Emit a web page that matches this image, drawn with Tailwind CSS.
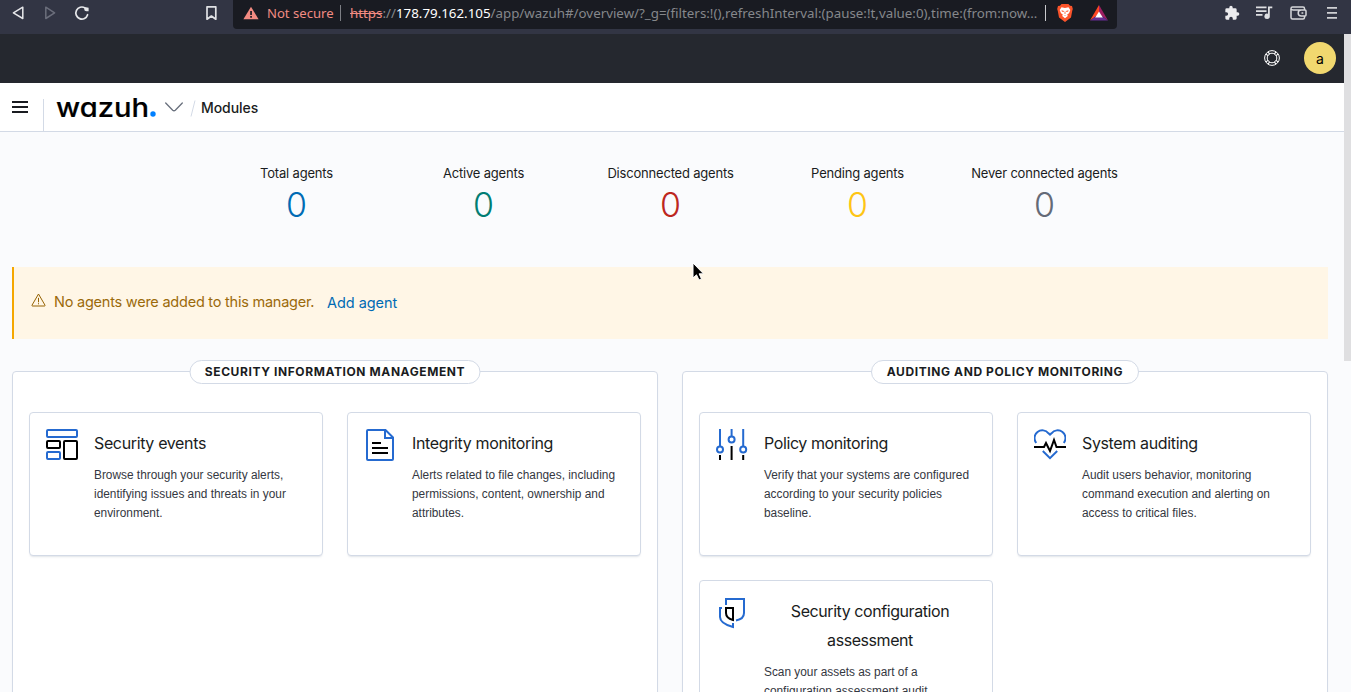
<!DOCTYPE html>
<html lang="en">
<head>
<meta charset="utf-8">
<title>Wazuh</title>
<script src="https://cdn.jsdelivr.net/npm/@tailwindcss/browser@4"></script>
</head>
<body class="w-[1351px] h-[692px] overflow-hidden relative bg-[#fafbfd] font-['Inter',sans-serif] text-[#1a1c21] flex flex-col">

<!-- Browser toolbar -->
<div class="h-[34px] shrink-0 bg-[#323544] flex items-start">
  <div class="w-[233px] h-[26px] flex items-center shrink-0">
    <svg class="ml-[12px]" width="13" height="16" viewBox="0 0 13 16" fill="none" stroke="#e6e7ea" stroke-width="1.5" stroke-linejoin="round"><path d="M10.800 2.200V13.500L1.400 7.900Z"/></svg>
    <svg class="ml-[19px]" width="13" height="16" viewBox="0 0 13 16" fill="none" stroke="#6b6e7b" stroke-width="1.500" stroke-linejoin="round"><path d="M1.800 2.200V13.500L10.600 7.900Z"/></svg>
    <svg class="ml-[17px]" width="16" height="16" viewBox="0 0 16 16" fill="none" stroke="#e6e7ea" stroke-width="1.700" stroke-linecap="round"><path d="M13.600 9.700A6 6 0 1 1 11 2.900"/><path d="M10.200 3.200Q10.600 2 12 2.200L14.600 2.800V6.200H12.400Q10.200 6.200 10.200 3.900Z" fill="#e6e7ea" stroke="none"/></svg>
    <svg class="ml-[115.500px]" width="11" height="16" viewBox="0 0 11 16" fill="none" stroke="#e0e1e4" stroke-width="1.700" stroke-linejoin="round"><path d="M1 1.800H9.800V14.200L5.400 11L1 14.200Z"/></svg>
  </div>
  <div class="w-[884px] h-[29px] bg-[#191b22] rounded-b-[4px] flex items-center pb-[3px] shrink-0 font-['Noto_Sans',sans-serif] text-[13.330px] whitespace-nowrap">
    <svg class="ml-[10px] shrink-0" width="16" height="14" viewBox="0 0 16 14"><path d="M8 .8L15.600 13.200H.4Z" fill="#f28b82"/><path d="M7.200 5h1.700v4H7.200zM7.200 10h1.700v1.700H7.200z" fill="#191b22"/></svg>
    <span class="ml-[8px] mt-[2px] w-[67px] text-[13.100px] text-[#f28b82]">Not secure</span>
    <span class="ml-[6px] w-px h-4 bg-[#7c7e84]"></span>
    <span class="ml-[9px] mt-[2px] w-[689px] text-[#85878b]"><span class="text-[#f28b82] line-through">https</span>://<span class="text-white">178.79.162.105</span>/app/wazuh#/overview/?_g=(filters:!(),refreshInterval:(pause:!t,value:0),time:(from:now…</span>
    <span class="ml-[6px] w-px h-4 bg-[#c9cacd]"></span>
    <svg class="ml-[11px] shrink-0" width="16" height="18" viewBox="0 0 16 18"><path d="M4.500 0H11.500L13 1.700L15 2L15.800 5L15.200 7L14 13.500L8 18L2 13.500L.8 7L.2 5L1 2L3 1.700Z" fill="#fb542b"/><path d="M4.500 3.300L8 4L11.500 3.300L13.300 6L12 9.300L10.200 10.500L10.800 12L8 14.200L5.200 12L5.800 10.500L4 9.300L2.700 6Z" fill="#fff"/><path d="M4.500 6.200L7 7L6.500 8L4.800 7.400ZM11.500 6.200L9 7L9.500 8L11.200 7.400ZM7.600 7.500h.8v2.500h-.8zM6.300 10.800L8 11.400L9.700 10.800L8 12Z" fill="#fb542b"/></svg>
    <svg class="ml-[17px] shrink-0" width="18" height="16" viewBox="0 0 18 16"><path d="M9 0L0 15.500L9 9Z" fill="#ff4724"/><path d="M9 0L18 15.500L9 9Z" fill="#9e1f63"/><path d="M0 15.500H18L9 9Z" fill="#662d91"/><path d="M9 6.500L12.800 12.500H5.200Z" fill="#fff"/></svg>
  </div>
  <div class="h-[26px] flex items-center shrink-0">
    <svg class="ml-[107px]" width="16" height="16" viewBox="0 0 24 24" fill="#ececee"><path d="M20.500 11H19V7a2 2 0 0 0-2-2h-4V3.500a2.500 2.500 0 0 0-5 0V5H4a2 2 0 0 0-2 2v3.800h1.500a2.700 2.700 0 0 1 0 5.400H2V20a2 2 0 0 0 2 2h3.800v-1.500a2.700 2.700 0 0 1 5.400 0V22H17a2 2 0 0 0 2-2v-4h1.500a2.500 2.500 0 0 0 0-5z"/></svg>
    <svg class="ml-[16px]" width="17" height="14" viewBox="0 0 17 14" fill="#dedfe2"><path d="M0 .5h10.500v1.700H0zM0 4.300h10.500V6H0zM0 8.100h6.500v1.700H0z"/><path d="M12 .5h4.300v1.800h-2.500V10a2.700 2.700 0 1 1-1.800-2.300z"/></svg>
    <svg class="ml-[17px]" width="17" height="14" viewBox="0 0 17 14" fill="none" stroke="#d6d7da" stroke-width="1.500"><path d="M14.500 4V2.500a1.500 1.500 0 0 0-1.500-1.500H2.500A1.500 1.500 0 0 0 1 2.500v9A1.500 1.500 0 0 0 2.500 13H13a1.500 1.500 0 0 0 1.500-1.500V10"/><path d="M1 3.200Q1.500 4 3 4H15a1 1 0 0 1 1 1v4a1 1 0 0 1-1 1h-3.800a3 3 0 0 1 0-6"/><path d="M11.500 7h1.800"/></svg>
    <svg class="ml-[20px]" width="11" height="12" viewBox="0 0 11 12" fill="#cfd0d3"><path d="M0 0h10v1.800H0zM0 5h10v1.800H0zM0 10h10v1.800H0z"/></svg>
  </div>
</div>

<div class="flex flex-1 min-h-0">
 <div class="w-[1344px] shrink-0 flex flex-col">
  <!-- Top header -->
  <header class="h-[49px] shrink-0 bg-[#25282f] flex items-center justify-end pr-[8px] pb-px">
    <svg class="mr-[24px]" width="16" height="16" viewBox="0 0 16 16" fill="none" stroke="#fff" stroke-width="1"><circle cx="8" cy="8" r="7.400"/><circle cx="8" cy="8" r="4.800"/><path stroke-width="1.100" d="M1.900 4.200L4.200 5.600M4.200 1.900L5.600 4.200M14.100 4.200L11.800 5.600M11.800 1.900L10.400 4.200M1.900 11.800L4.200 10.400M4.200 14.100L5.600 11.800M14.100 11.800L11.800 10.400M11.800 14.100L10.400 11.800"/></svg>
    <span class="size-8 rounded-full bg-[#f1d86f] flex items-center justify-center text-[14px] text-black">a</span>
  </header>

  <!-- Navigation -->
  <nav class="h-[49px] shrink-0 bg-white border-b border-[#d3dae6] flex items-center">
    <svg class="ml-[12px]" width="16" height="12" viewBox="0 0 16 12" fill="#1a1c21"><path d="M0 0h16v2H0zM0 5h16v2H0zM0 10h16v2H0z"/></svg>
    <span class="ml-[15px] mt-4 w-px h-8 bg-[#d3dae6]"></span>
    <svg class="ml-[12px]" width="102" height="30" viewBox="0 0 102 30"><text x="0" y="24.500" textLength="93" lengthAdjust="spacingAndGlyphs" class="font-['Inter',sans-serif] text-[26px] font-medium [font-feature-settings:'cv11']" fill="#000" stroke="#000" stroke-width=".2">wazuh</text><circle cx="97" cy="22" r="2.700" fill="#0080ff"/></svg>
    <svg class="ml-[7px]" width="18" height="10" viewBox="0 0 18 10" fill="none" stroke="#69707d" stroke-width="1.300" stroke-linecap="round"><path d="M.7 1L7.700 8.200Q9 9.400 10.300 8.200L17.300 1"/></svg>
    <svg class="ml-[7px] mt-[3px]" width="6" height="17" viewBox="0 0 6 17" stroke="#d3dae6"><path d="M5 .5L1 16.500"/></svg>
    <span class="ml-[5px] text-[14px] font-medium tracking-[-.07px]">Modules</span>
  </nav>

  <!-- Agent counters -->
  <section class="flex w-[935px] ml-[203px] pt-[32px] h-[135px] shrink-0 text-[13px] tracking-[-.19px] text-center text-[#1a1c21]">
    <div class="flex-1 whitespace-nowrap"><p class="h-5 leading-[19px]">Total agents</p><p class="text-[34px] leading-[41px] tracking-normal font-light text-[#006bb4]">0</p></div>
    <div class="flex-1 whitespace-nowrap"><p class="h-5 leading-[19px]">Active agents</p><p class="text-[34px] leading-[41px] tracking-normal font-light text-[#017d73]">0</p></div>
    <div class="flex-1 whitespace-nowrap"><p class="h-5 leading-[19px]">Disconnected agents</p><p class="text-[34px] leading-[41px] tracking-normal font-light text-[#bd271e]">0</p></div>
    <div class="flex-1 whitespace-nowrap"><p class="h-5 leading-[19px]">Pending agents</p><p class="text-[34px] leading-[41px] tracking-normal font-light text-[#fec514]">0</p></div>
    <div class="flex-1 whitespace-nowrap"><p class="h-5 leading-[19px]">Never connected agents</p><p class="text-[34px] leading-[41px] tracking-normal font-light text-[#646a77]">0</p></div>
  </section>

  <!-- Warning callout -->
  <section class="ml-[12px] w-[1316px] h-[72px] shrink-0 bg-[#fff6e6] border-l-2 border-[#f5a700] flex items-center text-[14.500px] text-[#9b6a0b]">
    <svg class="ml-[16.500px] mb-[7px]" width="15" height="14" viewBox="0 0 15 14" fill="none" stroke="#966303" stroke-width="1"><path d="M7.500 1L14 12.200Q14.300 13 13.500 13H1.500Q.7 13 1 12.200Z" stroke-linejoin="round"/><path d="M7.500 4.800V9.300M7.500 10.200V11.300"/></svg>
    <span class="ml-[8.500px] w-[260px] whitespace-nowrap mb-[2px] tracking-[-.23px]">No agents were added to this manager.</span>
    <a class="ml-[13px] tracking-[-.05px] text-[#006bb4]">Add agent</a>
  </section>

  <!-- Module groups -->
  <main class="ml-[12px] mt-[32px] w-[1316px] flex gap-6 flex-1 min-h-0">
    <section class="relative w-[646px] h-[400px] bg-white border border-[#d3dae6] rounded-[4px] shadow-[0_2px_2px_-1px_rgba(152,162,179,.3)] px-4 pt-[40px]">
      <h2 class="absolute -top-[12px] left-1/2 -translate-x-1/2 h-6 w-[291px] rounded-full border border-[#d3dae6] bg-white text-[12px] font-bold leading-[22px] tracking-[.6px] text-center whitespace-nowrap">SECURITY INFORMATION MANAGEMENT</h2>
      <div class="grid grid-cols-[294px_294px] gap-6">
        <article class="h-[144px] border border-[#d3dae6] rounded-[4px] bg-white shadow-[0_2px_2px_-1px_rgba(152,162,179,.3)] p-4 flex gap-4">
          <svg class="shrink-0" width="32" height="32" viewBox="0 0 32 32" fill="none" stroke-width="2"><rect x="1" y="1" width="30" height="7" rx="1" stroke="#256ad0"/><rect x="1" y="12" width="13" height="7" rx="1" stroke="#000"/><rect x="18" y="12" width="13" height="18" rx="1" stroke="#000"/><rect x="1" y="23" width="13" height="7" rx="1" stroke="#256ad0"/></svg>
          <div class="flex-1"><h3 class="text-[16px] leading-[29px] tracking-[-.36px]">Security events</h3><p class="mt-2 font-['Liberation_Sans',sans-serif] text-[11.860px] leading-[19px] text-[#343741]">Browse through your security alerts,<br>identifying issues and threats in your<br>environment.</p></div>
        </article>
        <article class="h-[144px] border border-[#d3dae6] rounded-[4px] bg-white shadow-[0_2px_2px_-1px_rgba(152,162,179,.3)] p-4 flex gap-4">
          <svg class="shrink-0" width="32" height="32" viewBox="0 0 32 32" fill="none" stroke-width="2"><path d="M4 1H21.500L29 8.500V30a1 1 0 0 1-1 1H4a1 1 0 0 1-1-1V2a1 1 0 0 1 1-1ZM21 1V9H29" stroke="#256ad0"/><path d="M8 14h9M8 19h16M8 24h16" stroke="#000"/></svg>
          <div class="flex-1"><h3 class="text-[16px] leading-[29px] tracking-[-.36px]">Integrity monitoring</h3><p class="mt-2 font-['Liberation_Sans',sans-serif] text-[11.860px] leading-[19px] text-[#343741]">Alerts related to file changes, including<br>permissions, content, ownership and<br>attributes.</p></div>
        </article>
      </div>
    </section>

    <section class="relative w-[646px] h-[400px] bg-white border border-[#d3dae6] rounded-[4px] shadow-[0_2px_2px_-1px_rgba(152,162,179,.3)] px-4 pt-[40px]">
      <h2 class="absolute -top-[12px] left-1/2 -translate-x-1/2 h-6 w-[268px] rounded-full border border-[#d3dae6] bg-white text-[12px] font-bold leading-[22px] tracking-[.6px] text-center whitespace-nowrap">AUDITING AND POLICY MONITORING</h2>
      <div class="grid grid-cols-[294px_294px] gap-6">
        <article class="h-[144px] border border-[#d3dae6] rounded-[4px] bg-white shadow-[0_2px_2px_-1px_rgba(152,162,179,.3)] p-4 flex gap-4">
          <svg class="shrink-0" width="32" height="32" viewBox="0 0 32 32" fill="none" stroke-width="2"><path d="M4 0V17M15.600 0V7M27.200 0V17" stroke="#256ad0"/><circle cx="4" cy="20.400" r="3" stroke="#256ad0"/><circle cx="15.600" cy="10.600" r="3" stroke="#256ad0"/><circle cx="27.200" cy="20.400" r="3" stroke="#256ad0"/><path d="M4 26V31M15.600 17V31M27.200 26V31" stroke="#000"/></svg>
          <div class="flex-1"><h3 class="text-[16px] leading-[29px] tracking-[-.4px]">Policy monitoring</h3><p class="mt-2 font-['Liberation_Sans',sans-serif] text-[11.860px] leading-[19px] text-[#343741]">Verify that your systems are configured<br>according to your security policies<br>baseline.</p></div>
        </article>
        <article class="h-[144px] border border-[#d3dae6] rounded-[4px] bg-white shadow-[0_2px_2px_-1px_rgba(152,162,179,.3)] p-4 flex gap-4">
          <svg class="shrink-0" width="32" height="32" viewBox="0 0 32 32" fill="none" stroke-width="2"><path d="M2.200 14A7.700 7.700 0 0 1 14.500 4.300L16 5.700L17.500 4.300A7.700 7.700 0 0 1 29.800 14M8.800 22L16 29.200L23.200 22" stroke="#256ad0"/><path d="M0 18H10L12 14L16 22L20 11L22.500 18H32" stroke="#000"/></svg>
          <div class="flex-1"><h3 class="text-[16px] leading-[29px] tracking-[-.36px]">System auditing</h3><p class="mt-2 font-['Liberation_Sans',sans-serif] text-[11.860px] leading-[19px] text-[#343741]">Audit users behavior, monitoring<br>command execution and alerting on<br>access to critical files.</p></div>
        </article>
        <article class="h-[173px] border border-[#d3dae6] rounded-[4px] bg-white p-4 flex gap-4">
          <svg class="shrink-0" width="32" height="32" viewBox="0 0 32 32" fill="none" stroke-width="2"><path d="M10 8V2H28V16Q28 22 20 23.500M6 11H4V20Q4 26.500 17 30V26" stroke="#256ad0"/><path d="M10 11H17V23Q10 21 10 16Z" stroke="#000"/></svg>
          <div class="flex-1"><h3 class="text-[16px] leading-[29px] tracking-[-.43px] text-center">Security configuration<br>assessment</h3><p class="mt-2 font-['Liberation_Sans',sans-serif] text-[11.860px] leading-[19px] text-[#343741]">Scan your assets as part of a<br>configuration assessment audit.</p></div>
        </article>
      </div>
    </section>
  </main>
 </div>
 <!-- Scrollbar thumb -->
 <div class="w-[7px] h-[327px] bg-[#dfdfe1]"></div>
</div>

<!-- Mouse pointer -->
<svg class="absolute left-[691px] top-[261px]" width="16" height="22" viewBox="0 0 16 22"><path d="M2 2V17L5.500 13.800L8 19L10.500 17.900L8.100 12.800H12.500Z" fill="#000" stroke="#fff" stroke-width="1"/></svg>
</body>
</html>
